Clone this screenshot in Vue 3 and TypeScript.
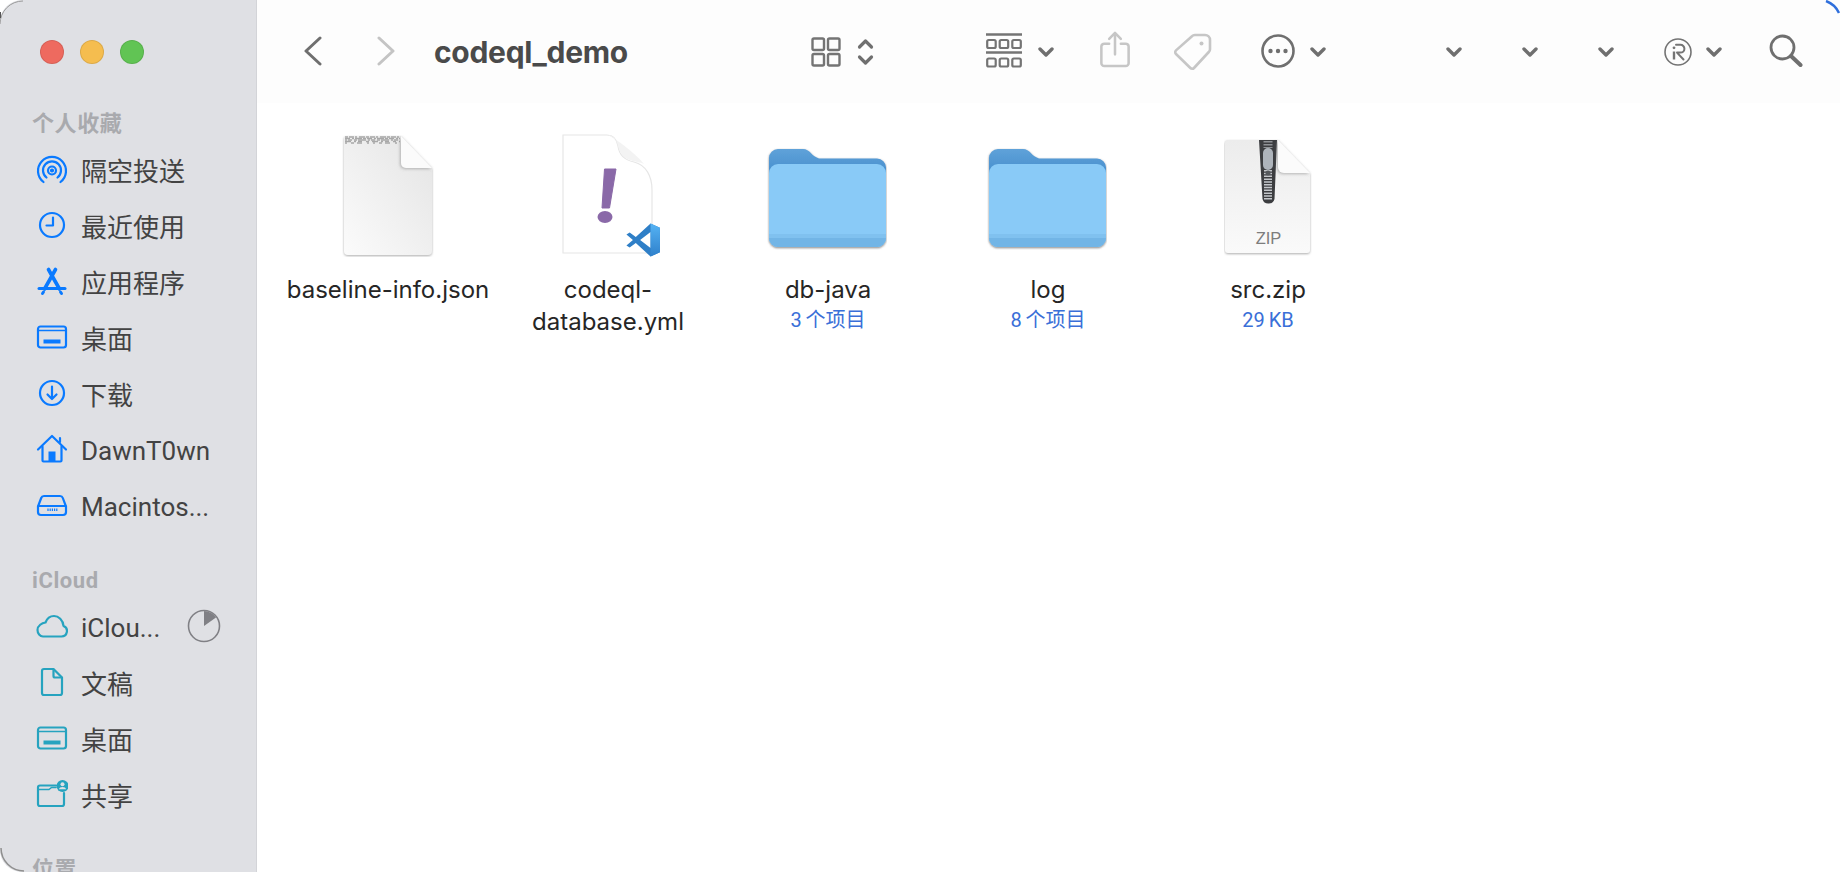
<script setup lang="ts">
interface SideItem {
  label: string
  icon: string
  quota?: boolean
}

interface SideGroup {
  title: string
  tint: string
  items: SideItem[]
}

interface FileItem {
  kind: 'blank' | 'yaml' | 'folder' | 'zip'
  name: string[]
  meta?: string
}

const groups: SideGroup[] = [
  {
    title: '个人收藏',
    tint: 'blue',
    items: [
      { label: '隔空投送', icon: 'airdrop' },
      { label: '最近使用', icon: 'clock' },
      { label: '应用程序', icon: 'apps' },
      { label: '桌面', icon: 'desktop' },
      { label: '下载', icon: 'download' },
      { label: 'DawnT0wn', icon: 'home' },
      { label: 'Macintos...', icon: 'disk' }
    ]
  },
  {
    title: 'iCloud',
    tint: 'teal',
    items: [
      { label: 'iClou...', icon: 'cloud', quota: true },
      { label: '文稿', icon: 'doc' },
      { label: '桌面', icon: 'desktop' },
      { label: '共享', icon: 'shared' }
    ]
  },
  { title: '位置', tint: 'blue', items: [] }
]

const files: FileItem[] = [
  { kind: 'blank', name: ['baseline-info.json'] },
  { kind: 'yaml', name: ['codeql-', 'database.yml'] },
  { kind: 'folder', name: ['db-java'], meta: '3 个项目' },
  { kind: 'folder', name: ['log'], meta: '8 个项目' },
  { kind: 'zip', name: ['src.zip'], meta: '29 KB' }
]

// the speckled header strip on the blank document preview
const noiseRows = [
  { y: 2, dash: '3 1 5 1 2 2 6 1' },
  { y: 3.5, dash: '5 2 2 1 7 1 3 1' },
  { y: 5, dash: '2 1 4 2 3 1 8 2' },
  { y: 6.5, dash: '6 3 2 2 4 4 3 3' },
  { y: 8, dash: '2 4 3 3 5 5 2 4' }
]

// Latin labels sit higher than the CJK fallback in the same row
const isLatin = (text: string) => /^[a-zA-Z0-9.]+$/.test(text)
</script>

<template>
  <div class="window">
    <aside class="sidebar">
      <div class="lights">
        <span class="light red"></span>
        <span class="light yellow"></span>
        <span class="light green"></span>
      </div>
      <section v-for="group in groups" :key="group.title" class="group" :class="group.tint">
        <h3 class="group-title">{{ group.title }}</h3>
        <div v-for="item in group.items" :key="item.label" class="side-row">
          <svg class="side-icon" viewBox="0 0 32 32" fill="none" stroke="currentColor" stroke-width="2.2" stroke-linecap="round" stroke-linejoin="round">
            <template v-if="item.icon === 'airdrop'">
              <path d="M7.500 29a14 14 0 1 1 17 0" />
              <path d="M10.500 24.500a9 9 0 1 1 11 0" />
              <circle cx="16" cy="17.500" r="4" />
              <circle cx="16" cy="17.500" r="1" fill="currentColor" />
            </template>
            <template v-else-if="item.icon === 'clock'">
              <circle cx="16" cy="16" r="12" />
              <path d="M17 8.500V16.500H10.500" />
            </template>
            <template v-else-if="item.icon === 'apps'">
              <path d="M12.500 4.500L23.500 24" stroke-width="3.600" />
              <path d="M19.500 4.500L8.500 24" stroke-width="3.600" />
              <path d="M3 23.500H29" stroke-width="3" />
              <path d="M6.500 28.500l1-1.500M25.500 28.500l-1-1.500" stroke-width="3" />
            </template>
            <template v-else-if="item.icon === 'desktop'">
              <rect x="2" y="5.500" width="28" height="21" rx="2.500" />
              <path d="M2 9.500H30" stroke-width="1.500" />
              <rect x="7.500" y="18.500" width="17" height="4" fill="currentColor" stroke="none" />
            </template>
            <template v-else-if="item.icon === 'download'">
              <circle cx="16" cy="16" r="12" />
              <path d="M16 9.500V21.500M11.500 17.500L16 22L20.500 17.500" />
            </template>
            <template v-else-if="item.icon === 'home'">
              <path d="M2 16.500L16 3L30 16.500" />
              <path d="M6.500 13.500V27.500a1 1 0 0 0 1 1H24.500a1 1 0 0 0 1-1V13.500" />
              <path d="M24 5V9" />
              <rect x="12.500" y="18.500" width="7" height="10" fill="currentColor" stroke="none" />
            </template>
            <template v-else-if="item.icon === 'disk'">
              <path d="M8 7H24a3 3 0 0 1 2.800 2L30 17.500V23a3 3 0 0 1-3 3H5a3 3 0 0 1-3-3V17.500L5.200 9A3 3 0 0 1 8 7Z" />
              <path d="M2.500 17H29.500" stroke-width="1.800" />
              <path d="M12 19.500v2.500M14.200 19.500v2.500M16.400 19.500v2.500M18.600 19.500v2.500M20.800 19.500v2.500" stroke-width="1.200" stroke-linecap="butt" />
            </template>
            <template v-else-if="item.icon === 'cloud'">
              <path d="M7 26.500H25.500a5.500 5.500 0 0 0 2-10.600C27 10 22.500 6 18 6c-4 0-7 2.500-8.500 6.500C6 13 1.500 15.500 1.500 20c0 3.500 2.500 6.500 5.500 6.500Z" />
            </template>
            <template v-else-if="item.icon === 'doc'">
              <path d="M8 3H17.500L26 11.500V27a2 2 0 0 1-2 2H8a2 2 0 0 1-2-2V5a2 2 0 0 1 2-2Z" />
              <path d="M17.500 3.500V10a1.500 1.500 0 0 0 1.500 1.500H25.500" />
            </template>
            <template v-else-if="item.icon === 'shared'">
              <path d="M20 7.500H4a2 2 0 0 0-2 2V26a2 2 0 0 0 2 2H26a2 2 0 0 0 2-2V15" />
              <path d="M2 11.500H13L15.500 9.500H20" stroke-width="1.600" />
              <circle cx="26.500" cy="8" r="6" fill="currentColor" stroke="none" />
              <circle cx="26.500" cy="6.200" r="2" fill="#dfe0e4" stroke="none" />
              <path d="M22.800 11.300a3.800 3 0 0 1 7.400 0Z" fill="#dfe0e4" stroke="none" />
            </template>
          </svg>
          <span class="side-label" :class="{ latin: isLatin(item.label) }">{{ item.label }}</span>
          <svg v-if="item.quota" class="quota" viewBox="0 0 34 34">
            <circle cx="17" cy="17" r="15.500" fill="none" stroke="#808085" stroke-width="1.600" />
            <path d="M17 2a15 15 0 0 1 12 6.500L17 17Z" fill="#808085" />
          </svg>
        </div>
      </section>
    </aside>

    <main class="main">
      <header class="toolbar">
        <svg class="tb nav-back" viewBox="0 0 18 30" fill="none" stroke="#6f6f6f" stroke-width="3" stroke-linecap="round" stroke-linejoin="round"><path d="M16 2L2 15L16 28" /></svg>
        <svg class="tb nav-forward" viewBox="0 0 18 30" fill="none" stroke="#c4c4c4" stroke-width="3" stroke-linecap="round" stroke-linejoin="round"><path d="M2 2L16 15L2 28" /></svg>
        <span class="title">codeql_demo</span>

        <svg class="tb view-grid" viewBox="0 0 30 30" fill="none" stroke="#747474" stroke-width="2.400"><rect x="1.500" y="1.500" width="11.500" height="11.500" rx="1.500" /><rect x="17" y="1.500" width="11.500" height="11.500" rx="1.500" /><rect x="1.500" y="17" width="11.500" height="11.500" rx="1.500" /><rect x="17" y="17" width="11.500" height="11.500" rx="1.500" /></svg>
        <svg class="tb updown" viewBox="0 0 16 28" fill="none" stroke="#6f6f6f" stroke-width="3.200" stroke-linecap="round" stroke-linejoin="round"><path d="M2 9L8 3L14 9" /><path d="M2 19L8 25L14 19" /></svg>

        <svg class="tb group-view" viewBox="0 0 36 35" fill="none" stroke="#747474" stroke-width="2.200"><path d="M0 1.500H36M0 19.500H36" stroke-width="2.400" /><rect x="1.200" y="7" width="8.500" height="8" rx="1.500" /><rect x="13.700" y="7" width="8.500" height="8" rx="1.500" /><rect x="26.300" y="7" width="8.500" height="8" rx="1.500" /><rect x="1.200" y="25.500" width="8.500" height="8" rx="1.500" /><rect x="13.700" y="25.500" width="8.500" height="8" rx="1.500" /><rect x="26.300" y="25.500" width="8.500" height="8" rx="1.500" /></svg>
        <svg class="tb chev c-group" viewBox="0 0 16 10"><path d="M2 2L8 8L14 2" /></svg>

        <svg class="tb share" viewBox="0 0 30 38" fill="none" stroke="#c6c6c6" stroke-width="2.600" stroke-linecap="round" stroke-linejoin="round"><path d="M9 13H4a3 3 0 0 0-3 3V33a3 3 0 0 0 3 3H26a3 3 0 0 0 3-3V16a3 3 0 0 0-3-3H21" /><path d="M15 24V2M9 8L15 2L21 8" /></svg>
        <svg class="tb tag" viewBox="0 0 38 38" fill="none" stroke="#c6c6c6" stroke-width="2.600" stroke-linejoin="round"><path d="M21 2H31a5 5 0 0 1 5 5V16a4 4 0 0 1-1.200 3L20 35a2.500 2.500 0 0 1-3.600 0L2 21a2.500 2.500 0 0 1 0-3.600L18 3.200A4 4 0 0 1 21 2Z" /><circle cx="27.500" cy="10.500" r="2" fill="#c6c6c6" stroke="none" /></svg>
        <svg class="tb more" viewBox="0 0 34 34" fill="none" stroke="#6f6f6f" stroke-width="2.600"><circle cx="17" cy="17" r="15.500" /><circle cx="9.500" cy="17" r="2.200" fill="#6f6f6f" stroke="none" /><circle cx="17" cy="17" r="2.200" fill="#6f6f6f" stroke="none" /><circle cx="24.500" cy="17" r="2.200" fill="#6f6f6f" stroke="none" /></svg>
        <svg class="tb chev c-more" viewBox="0 0 16 10"><path d="M2 2L8 8L14 2" /></svg>

        <svg class="tb chev c-a" viewBox="0 0 16 10"><path d="M2 2L8 8L14 2" /></svg>
        <svg class="tb chev c-b" viewBox="0 0 16 10"><path d="M2 2L8 8L14 2" /></svg>
        <svg class="tb chev c-c" viewBox="0 0 16 10"><path d="M2 2L8 8L14 2" /></svg>

        <svg class="tb reg" viewBox="0 0 28 28" fill="none" stroke="#747474" stroke-width="1.600"><circle cx="14" cy="14" r="13" /><path d="M12 6.800H16.500a3.800 3.800 0 0 1 0 7.800H13L19.500 21.500" stroke-width="2" stroke-linecap="round" stroke-linejoin="round" /><path d="M10 13.500V21.500" stroke-width="2.400" /><circle cx="10" cy="9.800" r="1.400" fill="#747474" stroke="none" /></svg>
        <svg class="tb chev c-reg" viewBox="0 0 16 10"><path d="M2 2L8 8L14 2" /></svg>
        <svg class="tb search" viewBox="0 0 34 34" fill="none" stroke="#6f6f6f" stroke-linecap="round"><circle cx="13.500" cy="13.500" r="11.500" stroke-width="2.800" /><path d="M22 22L31.500 31" stroke-width="4" /></svg>
      </header>

      <div class="files">
        <div v-for="file in files" :key="file.name[0]" class="file">
          <div class="thumb" :class="file.kind">
            <svg v-if="file.kind === 'blank'" class="art" viewBox="0 0 92 122">
              <defs>
                <linearGradient id="blankFill" x1="0" y1="1" x2="1" y2="0"><stop offset="0" stop-color="#fbfbfb" /><stop offset="1" stop-color="#e4e4e4" /></linearGradient>
                <filter id="blankDrop" x="-10%" y="-10%" width="120%" height="120%"><feDropShadow dx="0" dy="1" stdDeviation="0.800" flood-color="#8a8a8a" flood-opacity="0.700" /></filter>
                <filter id="foldDrop" x="-40%" y="-40%" width="180%" height="180%"><feDropShadow dx="-1" dy="1" stdDeviation="1.500" flood-color="#777" flood-opacity="0.500" /></filter>
              </defs>
              <path d="M2 3a2 2 0 0 1 2-2H59L90 33V116a4 4 0 0 1-4 4H6a4 4 0 0 1-4-4Z" fill="url(#blankFill)" filter="url(#blankDrop)" />
              <path v-for="row in noiseRows" :key="row.y" :d="`M3 ${row.y}H58`" stroke="#a8a8a8" stroke-width="1.500" :stroke-dasharray="row.dash" fill="none" />
              <path d="M59 1L90 33H64a5 5 0 0 1-5-5Z" fill="#fbfbfb" filter="url(#foldDrop)" />
            </svg>
            <svg v-else-if="file.kind === 'yaml'" class="art" viewBox="0 0 104 126">
              <defs>
                <linearGradient id="vsBar" x1="0" y1="0" x2="0" y2="1"><stop offset="0" stop-color="#55b3f4" /><stop offset="1" stop-color="#2f80cb" /></linearGradient>
              </defs>
              <path d="M1 1H45C52 1 55 6 56 12C57 20 62 26 72 28C84 31 90 42 90 56V119H1Z" fill="#fff" stroke="#e6e6e6" stroke-width="1.200" />
              <path d="M46 1C58 8 72 18 82 30C78 28 74 28 71 27C62 25 58 20 56 12C55 6 52 2 46 1Z" fill="#f3f3f3" />
              <path d="M42.500 35H54L47.500 74H40Z" fill="#8a69a8" stroke="#8a69a8" stroke-width="1" stroke-linejoin="round" />
              <ellipse cx="43" cy="83" rx="7.500" ry="6" fill="#8a69a8" />
              <g transform="translate(63 88) scale(0.36)">
                <path fill-rule="evenodd" d="M71 96L97 84V16L71 4L30 42L13 29L4 35L22 50L4 65L13 71L30 58ZM71 28V72L42 50Z" fill="#2f7fc7" />
                <path d="M71 96L97 84V16L71 4V28V72Z" fill="url(#vsBar)" />
              </g>
            </svg>
            <svg v-else-if="file.kind === 'folder'" class="art" viewBox="0 0 120 104">
              <defs>
                <linearGradient id="folderBack" x1="0" y1="0" x2="0" y2="1"><stop offset="0" stop-color="#5fa2d9" /><stop offset="1" stop-color="#3a84c8" /></linearGradient>
                <filter id="folderDrop" x="-5%" y="-5%" width="110%" height="110%"><feDropShadow dx="0" dy="1" stdDeviation="0.800" flood-color="#555" flood-opacity="0.700" /></filter>
              </defs>
              <g filter="url(#folderDrop)">
                <path d="M2 12a9 9 0 0 1 9-9H36c7 0 8 7 16 9.500H110a9 9 0 0 1 9 9V40H2Z" fill="url(#folderBack)" />
                <rect x="2" y="18" width="117" height="83" rx="9" fill="#89caf7" />
                <path d="M2 88H119V92a9 9 0 0 1-9 9H11a9 9 0 0 1-9-9Z" fill="#80c1ef" />
                <path d="M2 92H119a9 9 0 0 1-9 9H11a9 9 0 0 1-9-9Z" fill="#72b5e6" />
              </g>
            </svg>
            <svg v-else class="art" viewBox="0 0 88 118">
              <defs>
                <linearGradient id="zipFill" x1="0" y1="0" x2="0" y2="1"><stop offset="0" stop-color="#ececec" /><stop offset="1" stop-color="#fafafa" /></linearGradient>
                <filter id="zipDrop" x="-10%" y="-10%" width="120%" height="120%"><feDropShadow dx="0" dy="1" stdDeviation="0.800" flood-color="#8a8a8a" flood-opacity="0.700" /></filter>
                <filter id="zipFold" x="-40%" y="-40%" width="180%" height="180%"><feDropShadow dx="-1" dy="1" stdDeviation="1.500" flood-color="#777" flood-opacity="0.500" /></filter>
              </defs>
              <path d="M1 4a3 3 0 0 1 3-3H54L86 34V111a3 3 0 0 1-3 3H4a3 3 0 0 1-3-3Z" fill="url(#zipFill)" filter="url(#zipDrop)" />
              <path d="M35 1H53L50.500 60a6 6 0 0 1-6 4.500a6 6 0 0 1-6-4.500Z" fill="#3c3d40" />
              <path d="M44 31V61" stroke="#c4c7cb" stroke-width="8" stroke-dasharray="1.500 1.300" fill="none" />
              <path d="M44 2V9" stroke="#8f9296" stroke-width="9" stroke-dasharray="1.500 1.500" fill="none" />
              <rect x="39" y="9" width="10" height="22" rx="5" fill="#aeb4bb" />
              <circle cx="44" cy="34" r="2.500" fill="#55585c" />
              <path d="M54 1L86 34H60a6 6 0 0 1-6-6Z" fill="#fbfbfb" filter="url(#zipFold)" />
              <text x="44.500" y="105" class="zip-text">ZIP</text>
            </svg>
          </div>
          <div class="file-name">
            <span v-for="line in file.name" :key="line" class="name-line">{{ line }}</span>
          </div>
          <div v-if="file.meta" class="file-meta">{{ file.meta }}</div>
        </div>
      </div>
    </main>

    <svg class="edges" viewBox="0 0 1840 872" fill="none">
      <path d="M0 24A23 23 0 0 1 23 1" stroke="#9a9a9a" stroke-width="1" />
      <path d="M0 12V18" stroke="#555" stroke-width="2" />
      <path d="M1 848A23 23 0 0 0 24 871" stroke="#8f8f8f" stroke-width="1.500" />
      <path d="M1826 1A23 23 0 0 1 1839 13" stroke="#2f6fdc" stroke-width="2.500" />
    </svg>
  </div>
</template>

<style>
html,
body {
  margin: 0;
  background: #fff;
  overflow: hidden;
}
</style>

<style scoped>
.window {
  position: relative;
  display: flex;
  width: 1840px;
  height: 872px;
  overflow: hidden;
  background: #fff;
  font-family: Roboto, "Noto Sans CJK SC", sans-serif;
}

.edges {
  position: absolute;
  left: 0;
  top: 0;
  width: 1840px;
  height: 872px;
  pointer-events: none;
}

.sidebar {
  width: 257px;
  height: 872px;
  flex-shrink: 0;
  box-sizing: border-box;
  padding: 40px 0 0 32px;
  background: #dfe0e4;
  border-right: 1px solid #d3d4d8;
  border-radius: 22px 0 0 22px;
  overflow: hidden;
}

.lights {
  display: flex;
  gap: 16px;
  margin: 0 0 48px 8px;
}

.light {
  width: 24px;
  height: 24px;
  box-sizing: border-box;
  border-radius: 50%;
  border: 1px solid rgba(0, 0, 0, 0.1);
}

.red { background: #ee6a5f; }
.yellow { background: #f5bd4f; }
.green { background: #61c454; }

.group {
  margin-bottom: 36px;
}

.group-title {
  margin: 0 0 5px;
  height: 24px;
  line-height: 24px;
  font-size: 22px;
  letter-spacing: 0.6px;
  font-weight: 700;
  color: #a9aaae;
}

.side-row {
  display: flex;
  align-items: center;
  height: 56px;
  position: relative;
}

.blue .side-icon { color: #0a7aff; }
.teal .side-icon { color: #26a3bf; }

.side-icon {
  width: 32px;
  height: 32px;
  margin-left: 4px;
  flex-shrink: 0;
}

.side-label {
  margin-left: 13px;
  font-size: 26px;
  color: #434343;
  white-space: nowrap;
}

.side-label.latin {
  padding-top: 4px;
}

.quota {
  position: absolute;
  left: 155px;
  top: 11px;
  width: 34px;
  height: 34px;
}

.main {
  flex: 1;
  min-width: 0;
}

.toolbar {
  position: relative;
  height: 103px;
  background: #fdfdfd;
}

.tb {
  position: absolute;
}

.chev {
  width: 16px;
  height: 10px;
  top: 47px;
  fill: none;
  stroke: #6f6f6f;
  stroke-width: 3.4;
  stroke-linecap: round;
  stroke-linejoin: round;
}

.nav-back { left: 47px; top: 36px; width: 18px; height: 30px; }
.nav-forward { left: 120px; top: 36px; width: 18px; height: 30px; }

.title {
  position: absolute;
  left: 177px;
  top: 33px;
  font-family: Inter, sans-serif;
  font-size: 30px;
  line-height: 38px;
  font-weight: 700;
  letter-spacing: -0.3px;
  color: #4a4a4a;
}

.view-grid { left: 554px; top: 37px; width: 30px; height: 30px; }
.updown { left: 600px; top: 38px; width: 17px; height: 28px; }
.group-view { left: 729px; top: 33px; width: 36px; height: 35px; }
.c-group { left: 781px; }
.share { left: 843px; top: 31px; width: 30px; height: 37px; }
.tag { left: 917px; top: 33px; width: 38px; height: 38px; }
.more { left: 1004px; top: 34px; width: 34px; height: 34px; }
.c-more { left: 1053px; }
.c-a { left: 1189px; }
.c-b { left: 1265px; }
.c-c { left: 1341px; }
.reg { left: 1407px; top: 38px; width: 28px; height: 28px; }
.c-reg { left: 1449px; }
.search { left: 1512px; top: 34px; width: 34px; height: 34px; }

.files {
  display: flex;
  padding: 0 0 0 21px;
}

.file {
  width: 220px;
  display: flex;
  flex-direction: column;
  align-items: center;
}

.thumb {
  height: 167px;
  width: 130px;
  position: relative;
  flex-shrink: 0;
}

.art {
  position: absolute;
  display: block;
}

.blank .art { left: 19px; top: 32px; width: 92px; height: 122px; }
.yaml .art { left: 19px; top: 31px; width: 104px; height: 126px; }
.folder .art { left: 4px; top: 43px; width: 120px; height: 104px; }
.zip .art { left: 21px; top: 36px; width: 88px; height: 118px; }

.zip-text {
  font-size: 16.5px;
  fill: #7d7d7d;
  text-anchor: middle;
  font-family: "Liberation Sans", sans-serif;
}

.file-name {
  display: flex;
  flex-direction: column;
  align-items: center;
  font-family: Inter, sans-serif;
  font-size: 24px;
  line-height: 32px;
  color: #262626;
  margin-top: 4px;
}

.name-line {
  white-space: nowrap;
}

.file-meta {
  margin-top: 2px;
  font-size: 20px;
  line-height: 24px;
  word-spacing: -1px;
  color: #3a6fd8;
}
</style>
